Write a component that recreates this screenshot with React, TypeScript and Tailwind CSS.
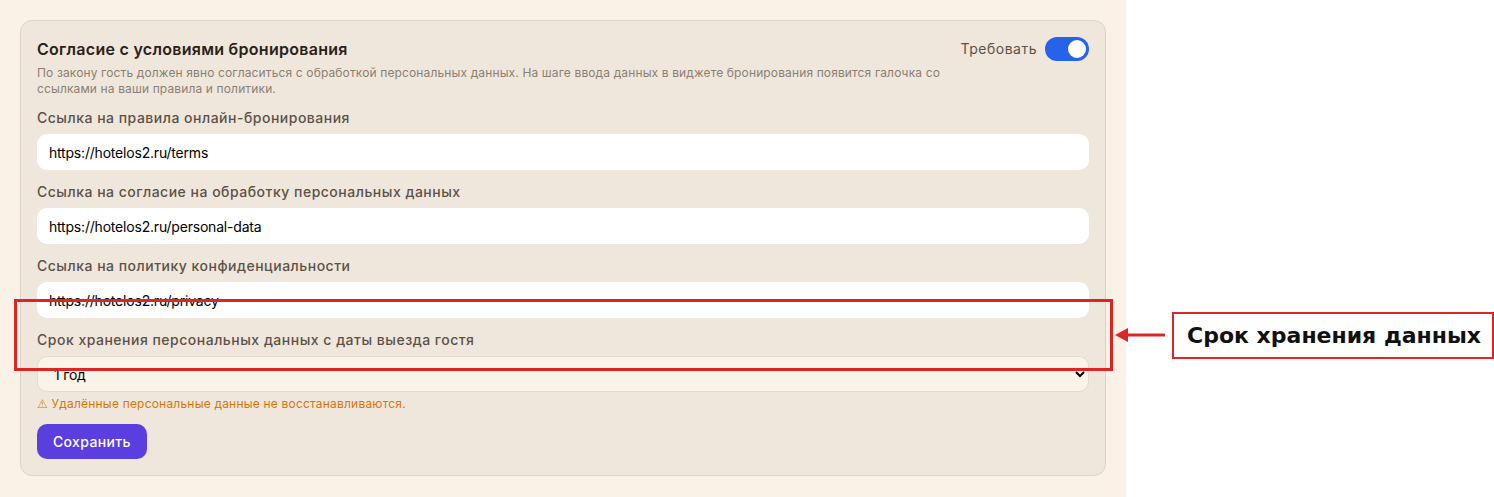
export default function App() {
  return (
    <div className="relative flex min-h-[497px] w-[1494px] bg-white font-['Inter',sans-serif]">
      {/* Settings panel */}
      <div className="w-[1126px] bg-[#faf2e6] p-5">
        <section className="rounded-xl border border-[#ddd3c5] bg-[#efe7dc] px-4 pt-4 pb-4">
          <div className="flex items-start justify-between">
            <h2 className="text-base leading-6 font-semibold tracking-[0.28px] text-[#2a2119]">
              Согласие с условиями бронирования
            </h2>
            <label className="flex items-center gap-2">
              <span className="text-sm tracking-[0.5px] text-[#5c5148]">Требовать</span>
              <span className="flex h-6 w-11 items-center justify-end rounded-full bg-[#2563eb] px-[3px]">
                <span className="h-[18px] w-[18px] rounded-full bg-white" />
              </span>
            </label>
          </div>
          <p className="mt-1 max-w-[920px] text-xs leading-4 tracking-[0.13px] text-[#8a7f74]">
            По закону гость должен явно согласиться с обработкой персональных данных. На шаге ввода данных в виджете бронирования появится галочка со ссылками на ваши правила и политики.
          </p>

          <div className="mt-[11px] flex flex-col gap-3">
            <Field label="Ссылка на правила онлайн-бронирования" value="https://hotelos2.ru/terms" />
            <Field label="Ссылка на согласие на обработку персональных данных" value="https://hotelos2.ru/personal-data" />
            <Field label="Ссылка на политику конфиденциальности" value="https://hotelos2.ru/privacy" />
            <div>
              <div className="mb-1.5 text-sm leading-5 font-medium tracking-[0.5px] text-[#5c5148]">
                Срок хранения персональных данных с даты выезда гостя
              </div>
              <select
                defaultValue="1"
                className="h-9 w-full rounded-[10px] border border-[#e4dbce] bg-[#faf3e8] px-3 text-sm tracking-[-0.2px] text-black"
              >
                <option value="1">1 год</option>
                <option value="3">3 года</option>
                <option value="5">5 лет</option>
              </select>
            </div>
          </div>
          <p className="mt-1 text-xs leading-4 tracking-[0.2px] text-[#d97706]">
            <span className="font-['DejaVu_Sans',sans-serif]">⚠&#xFE0E;</span> Удалённые персональные данные не восстанавливаются.
          </p>
          <button className="mt-3 h-[35px] rounded-[10px] bg-[#5a3ee0] px-4 text-sm font-medium tracking-[0.35px] text-white">
            Сохранить
          </button>
        </section>
      </div>

      {/* Annotation overlay */}
      <div className="absolute top-[299px] left-[14px] h-[72px] w-[1099px] border-[3px] border-[#dc2626]" />
      <svg className="absolute top-[327px] left-[1115px]" width="52" height="16" viewBox="0 0 52 16">
        <polygon points="0,8 13,1 13,15" fill="#dc2626" />
        <rect x="12" y="6.5" width="38" height="3" fill="#dc2626" />
      </svg>
      <div className="absolute top-[312px] left-[1172px] flex h-[47px] w-[322px] items-center border-2 border-[#dc2626] bg-white pl-[13px] font-['DejaVu_Sans',sans-serif] text-[22px] font-bold text-[#111]">
        Срок хранения данных
      </div>
    </div>
  );
}

function Field({ label, value }: { label: string; value: string }) {
  return (
    <div>
      <div className="mb-1.5 text-sm leading-5 font-medium tracking-[0.5px] text-[#5c5148]">{label}</div>
      <input
        defaultValue={value}
        className="h-9 w-full rounded-[10px] bg-white px-3 text-sm tracking-[-0.2px] text-black outline-none"
      />
    </div>
  );
}
